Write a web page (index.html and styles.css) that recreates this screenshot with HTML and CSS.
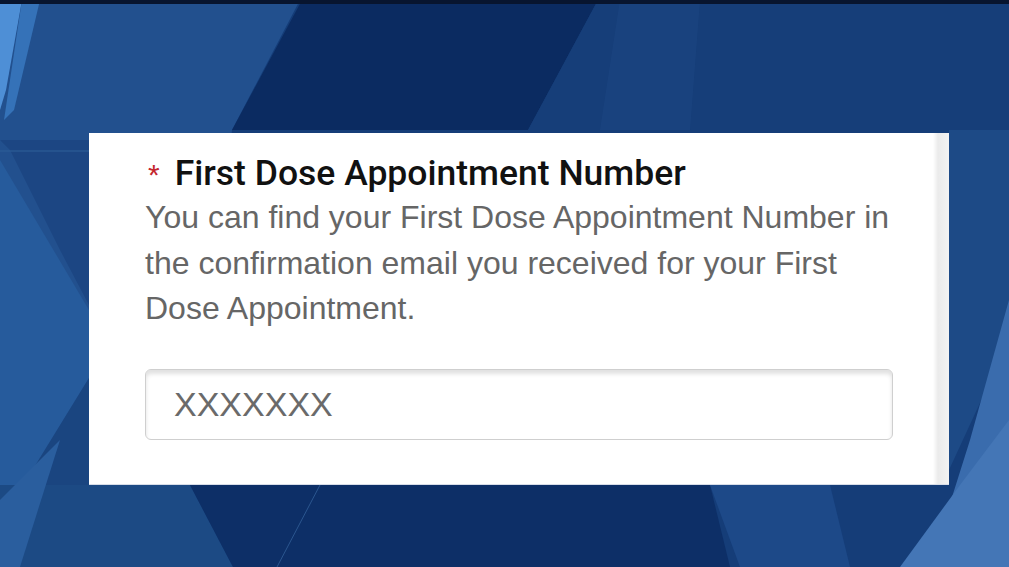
FILE: index.html
```html
<!DOCTYPE html>
<html>
<head>
    <title>First Dose Appointment Number</title>
    <link rel="stylesheet" href="styles.css">
</head>
<body>
  <svg class="backdrop" viewBox="0 0 1009 567" preserveAspectRatio="none" aria-hidden="true">
    <rect x="0" y="0" width="1009" height="567" fill="#153d78"/>
    <!-- left panels -->
    <polygon points="0,0 300,0 232,130 190,485 0,485" fill="#22508e"/>
    <polygon points="0,0 22,0 6,90 0,110" fill="#4e8fd6"/>
    <polygon points="22,0 40,0 14,110 4,120" fill="#3572b8"/>
    <polygon points="0,140 89,140 89,305 60,250 10,150" fill="#1c4683"/>
    <polygon points="0,160 89,310 89,378 0,523" fill="#265b9c"/>
    <polygon points="0,523 89,378 89,485 0,485" fill="#1a4580"/>
    <polygon points="0,485 190,485 233,567 0,567" fill="#1c4a84"/>
    <polygon points="0,500 60,440 20,567 0,567" fill="#2a5e9e"/>
    <!-- dark centre wedges -->
    <polygon points="302,0 598,0 528,130 232,130" fill="#0b2b61"/>
    <polygon points="190,485 710,485 730,567 233,567" fill="#0d2f67"/>
    <line x1="320" y1="485" x2="277" y2="567" stroke="#2b568f" stroke-width="1"/>
    <!-- right panels -->
    <polygon points="598,0 1009,0 1009,130 528,130" fill="#163e79"/>
    <polygon points="620,0 700,0 690,130 600,130" fill="#1d4682" opacity="0.6"/>
    <polygon points="949,130 1009,130 1009,340 949,470" fill="#1d4a86"/>
    <polygon points="1009,300 1009,567 930,567 970,440" fill="#3a6cad"/>
    <polygon points="710,485 830,485 850,567 740,567" fill="#1d4988"/>
    <polygon points="960,485 1009,420 1009,567 900,567" fill="#4476b6"/>
    <rect x="0" y="0" width="1009" height="4" fill="#08152f"/>
    <rect x="0" y="150" width="89" height="2" fill="#2c5b96" opacity="0.6"/>
  </svg>

  <div class="card">
    <label class="field-label" for="firstDoseNumber"><span class="required">*</span>First Dose Appointment Number</label>
    <p class="field-help">You can find your First Dose Appointment Number in the confirmation email you received for your First Dose Appointment.</p>
    <input class="field-input" type="text" id="firstDoseNumber" placeholder="XXXXXXX">
  </div>
</body>
</html>
```

FILE: styles.css
```css
html, body {
    margin: 0;
    height: 100%;
    overflow: hidden;
}

body {
    background: #153d78;
    font-family: "Liberation Sans", Arial, sans-serif;
    padding-top: 133px;
    box-sizing: border-box;
}

.backdrop {
    position: fixed;
    left: 0;
    top: 0;
    width: 100%;
    height: 100%;
    z-index: -1;
}

.card {
    width: 860px;
    margin-left: 89px;
    box-sizing: border-box;
    padding: 20px 56px 44px 56px;
    background: linear-gradient(90deg, #fff 0, #fff calc(100% - 16px), #ebebeb calc(100% - 11px), #f3f3f3 100%);
    border-bottom: 1px solid #d7dde8;
}

.field-label {
    display: block;
    font-family: Roboto, "Liberation Sans", sans-serif;
    font-weight: 500;
    font-size: 35.5px;
    line-height: 40px;
    color: #111;
}

.required {
    color: #c4262e;
    font-family: "Liberation Sans", sans-serif;
    font-weight: 400;
    font-size: 30px;
    margin-left: 3px;
    margin-right: 15px;
}

.field-help {
    margin: 0;
    width: 760px;
    font-size: 32px;
    line-height: 45.5px;
    color: #666;
}

.field-input {
    display: block;
    margin-top: 37px;
    width: 748px;
    height: 71px;
    box-sizing: border-box;
    padding: 0 28px;
    border: 1px solid #cfcfcf;
    border-radius: 6px;
    box-shadow: inset 0 4px 4px rgba(0, 0, 0, 0.12);
    font-family: "Liberation Sans", sans-serif;
    font-size: 34px;
    color: #333;
    background: #fff;
}

.field-input::placeholder {
    color: #6a6a6a;
}
```
